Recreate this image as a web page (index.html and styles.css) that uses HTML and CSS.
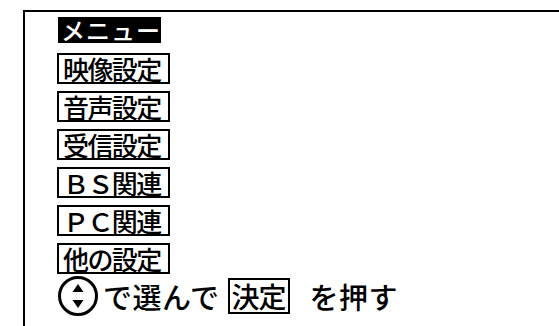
FILE: index.html
```html
<!DOCTYPE html>
<html lang="ja">

<head>
    <meta charset="UTF-8">
    <title>メニュー</title>
    <link rel="stylesheet" href="styles.css">
</head>

<body>
    <!-- Menu frame -->
    <div class="frame">
        <div class="menu">
            <div class="menu-title">メニュー</div>
            <div class="menu-item">映像設定</div>
            <div class="menu-item">音声設定</div>
            <div class="menu-item">受信設定</div>
            <div class="menu-item">ＢＳ関連</div>
            <div class="menu-item">ＰＣ関連</div>
            <div class="menu-item">他の設定</div>
        </div>

        <!-- Hint row -->
        <div class="hint">
            <svg class="updown" width="42" height="42" viewBox="0 0 42 42">
                <circle cx="21" cy="21" r="18.5" fill="none" stroke="#000" stroke-width="3"/>
                <polygon points="21,9 15.5,17 26.5,17" fill="#000"/>
                <polygon points="21,33 15.5,25 26.5,25" fill="#000"/>
            </svg>
            <span class="hint-text">で選んで</span>
            <span class="key">決定</span>
            <span class="hint-text">を押す</span>
        </div>
    </div>
</body>

</html>
```

FILE: styles.css
```css
body {
    margin: 0;
    background: #fff;
    font-family: "Noto Sans CJK JP", "Noto Sans", sans-serif;
    color: #000;
    overflow: hidden;
}

.frame {
    box-sizing: border-box;
    margin: 10px 0 0 23px;
    border-top: 2px solid #000;
    border-left: 2px solid #000;
    height: 316px;
    padding: 5px 0 0 32px;
}

.menu {
    display: flex;
    flex-direction: column;
    align-items: flex-start;
    gap: 7px;
}

.menu-title {
    background: #000;
    color: #fff;
    width: 100px;
    height: 26px;
    font-size: 24px;
    font-weight: 500;
    line-height: 26px;
    padding-left: 3px;
    letter-spacing: 1px;
    margin: 0 0 3px 1px;
}

.menu-item {
    width: 105px;
    height: 27px;
    border: 2px solid #000;
    font-size: 26px;
    font-weight: 500;
    line-height: 27px;
    padding-left: 4px;
    letter-spacing: -1.6px;
}

/* Hint row */
.hint {
    display: flex;
    align-items: center;
    margin-top: 1px;
}

.hint-text {
    font-size: 29px;
    font-weight: 500;
    line-height: 40px;
    margin-left: 4px;
    letter-spacing: 0.5px;
}

.key {
    font-size: 28px;
    font-weight: 500;
    line-height: 32px;
    border: 2px solid #000;
    padding: 0 2px;
    margin: 0 16px 0 8px;
    letter-spacing: -1px;
}
```
